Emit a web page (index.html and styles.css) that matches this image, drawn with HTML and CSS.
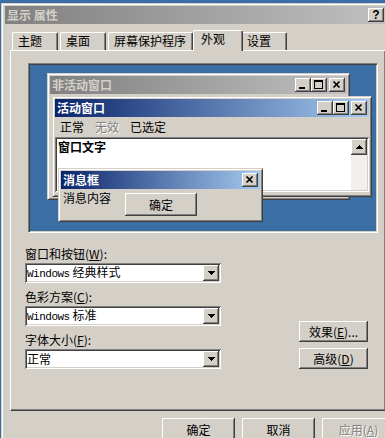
FILE: index.html
```html
<!DOCTYPE html>
<html lang="zh-CN">
    <head>
        <meta charset="UTF-8" />
        <title>显示 属性</title>
        <link rel="stylesheet" href="styles.css">
    </head>
    <body>
        <div class="dialog">
            <div class="caption inactive">
                <span class="caption-text">显示 属性</span>
                <span class="cap-btn help">?</span>
            </div>
            <div class="tabs">
                <div class="tab">主题</div>
                <div class="tab">桌面</div>
                <div class="tab">屏幕保护程序</div>
                <div class="tab selected">外观</div>
                <div class="tab">设置</div>
            </div>
            <div class="panel">
                <div class="preview">
                    <div class="win win-inactive">
                        <div class="caption inactive">
                            <span class="caption-text">非活动窗口</span>
                            <span class="cap-btn first"><svg width="16" height="14"><rect x="4" y="9" width="6" height="2"/></svg></span>
                            <span class="cap-btn"><svg width="16" height="14"><path fill-rule="evenodd" d="M3 2h9v9H3z M4 4h7v6H4z"/></svg></span>
                            <span class="cap-btn close"><svg width="16" height="14"><path d="M4.5 3.5L10.5 9.5M10.5 3.5L4.5 9.5" stroke="#000" stroke-width="1.7"/></svg></span>
                        </div>
                    </div>
                    <div class="win win-active">
                        <div class="caption active">
                            <span class="caption-text">活动窗口</span>
                            <span class="cap-btn first"><svg width="16" height="14"><rect x="4" y="9" width="6" height="2"/></svg></span>
                            <span class="cap-btn"><svg width="16" height="14"><path fill-rule="evenodd" d="M3 2h9v9H3z M4 4h7v6H4z"/></svg></span>
                            <span class="cap-btn close"><svg width="16" height="14"><path d="M4.5 3.5L10.5 9.5M10.5 3.5L4.5 9.5" stroke="#000" stroke-width="1.7"/></svg></span>
                        </div>
                        <div class="menubar">
                            <span class="menu-item">正常</span>
                            <span class="menu-item disabled">无效</span>
                            <span class="menu-item">已选定</span>
                        </div>
                        <div class="textarea">
                            <span class="window-text">窗口文字</span>
                            <div class="scrollbar">
                                <span class="scroll-btn"><svg width="7" height="4"><path d="M3 0h1v1H3z M2 1h3v1H2z M1 2h5v1H1z M0 3h7v1H0z"/></svg></span>
                            </div>
                        </div>
                    </div>
                    <div class="win msgbox">
                        <div class="caption active">
                            <span class="caption-text">消息框</span>
                            <span class="cap-btn first close"><svg width="16" height="14"><path d="M4.5 3.5L10.5 9.5M10.5 3.5L4.5 9.5" stroke="#000" stroke-width="1.7"/></svg></span>
                        </div>
                        <div class="msg-body">
                            <span class="msg-text">消息内容</span>
                            <span class="btn msg-ok">确定</span>
                        </div>
                    </div>
                </div>
                <div class="settings">
                    <div class="fields">
                        <div class="field">
                            <div class="label">窗口和按钮(<u>W</u>):</div>
                            <div class="combo">
                                <span class="combo-text"><span class="latin">Windows</span> 经典样式</span>
                                <span class="drop"><svg width="7" height="4"><path d="M0 0h7v1H0z M1 1h5v1H1z M2 2h3v1H2z M3 3h1v1H3z"/></svg></span>
                            </div>
                        </div>
                        <div class="field">
                            <div class="label">色彩方案(<u>C</u>):</div>
                            <div class="combo">
                                <span class="combo-text"><span class="latin">Windows</span> 标准</span>
                                <span class="drop"><svg width="7" height="4"><path d="M0 0h7v1H0z M1 1h5v1H1z M2 2h3v1H2z M3 3h1v1H3z"/></svg></span>
                            </div>
                        </div>
                        <div class="field">
                            <div class="label">字体大小(<u>F</u>):</div>
                            <div class="combo">
                                <span class="combo-text">正常</span>
                                <span class="drop"><svg width="7" height="4"><path d="M0 0h7v1H0z M1 1h5v1H1z M2 2h3v1H2z M3 3h1v1H3z"/></svg></span>
                            </div>
                        </div>
                    </div>
                    <div class="side-buttons">
                        <span class="btn side">效果(<u>E</u>)...</span>
                        <span class="btn side">高级(<u>D</u>)</span>
                    </div>
                </div>
            </div>
            <div class="footer">
                <span class="btn footer-btn">确定</span>
                <span class="btn footer-btn">取消</span>
                <span class="btn footer-btn disabled">应用(<u>A</u>)</span>
            </div>
        </div>
    </body>
</html>
```

FILE: styles.css
```css
* {
    box-sizing: border-box;
}
body {
    margin: 0;
    height: 438px;
    overflow: hidden;
    background: #3a6ea5;
    font-family: "Noto Sans CJK SC", sans-serif;
    font-size: 12px;
    line-height: 16px;
    color: #000;
}
.dialog {
    margin: 3px 0 0 1px;
    width: 389px;
    height: 435px;
    overflow: hidden;
    padding: 2px 3px 0;
    background: #d4d0c8;
    border: 1px solid;
    border-bottom: 0;
    border-color: #d4d0c8 #404040 #404040 #d4d0c8;
    box-shadow: inset 1px 1px #fff, inset -1px 0 #808080;
}
.caption {
    display: flex;
    align-items: center;
    height: 18px;
    padding: 0 2px;
}
.caption.inactive {
    background: linear-gradient(to right, #808080, #c0c0c0);
    color: #d4d0c8;
}
.caption.active {
    background: linear-gradient(to right, #0a246a, #a6caf0);
    color: #fff;
}
.caption-text {
    font-weight: bold;
    white-space: nowrap;
}
.cap-btn {
    display: flex;
    width: 16px;
    height: 14px;
    background: #d4d0c8;
    box-shadow: inset -1px -1px #404040, inset 1px 1px #fff, inset -2px -2px #808080;
}
.cap-btn.first,
.cap-btn.help {
    margin-left: auto;
}
.cap-btn.close {
    margin-left: 2px;
}
.cap-btn.first.close {
    margin-left: auto;
}
.help {
    justify-content: center;
    font-family: "Liberation Sans", sans-serif;
    font-weight: bold;
    font-size: 12px;
    line-height: 14px;
    color: #000;
}
.tabs {
    display: flex;
    align-items: flex-end;
    height: 20px;
    margin-top: 6px;
    padding-left: 7px;
}
.tab {
    min-width: 46px;
    height: 18px;
    margin-right: 2px;
    padding: 0 6px 0 5px;
    line-height: 16px;
    background: #d4d0c8;
    border-top: 1px solid #fff;
    border-left: 1px solid #fff;
    border-right: 1px solid #404040;
    border-radius: 2px 2px 0 0;
    box-shadow: inset -1px 0 #808080;
    white-space: nowrap;
}
.tab.selected {
    position: relative;
    z-index: 1;
    height: 21px;
    margin: 0 0 -1px -2px;
    min-width: 50px;
    padding: 0 8px 0 7px;
}
.tab.selected + .tab {
    margin-left: -2px;
}
.panel {
    height: 361px;
    margin-left: 5px;
    width: 376px;
    padding: 12px 0 0 14px;
    border: 1px solid;
    border-color: #fff #404040 #404040 #fff;
    box-shadow: inset -1px -1px #808080;
}
.preview {
    position: relative;
    width: 350px;
    height: 170px;
    margin-left: 3px;
    background: #3a6ea5;
    border: 1px solid;
    border-color: #808080 #fff #fff #808080;
    box-shadow: inset 1px 1px #404040, inset -1px -1px #d4d0c8;
}
.win {
    position: absolute;
    padding: 2px;
    background: #d4d0c8;
    border: 1px solid;
    border-color: #d4d0c8 #404040 #404040 #d4d0c8;
    box-shadow: inset 1px 1px #fff, inset -1px -1px #808080;
}
.win-inactive {
    left: 18px;
    top: 9px;
    width: 303px;
    height: 127px;
}
.win-active {
    left: 23px;
    top: 32px;
    width: 320px;
    height: 101px;
}
.msgbox {
    left: 29px;
    top: 104px;
    width: 205px;
    height: 54px;
}
.menubar {
    display: flex;
    height: 19px;
    line-height: 19px;
}
.menu-item {
    padding: 0 6px 0 5px;
}
.menu-item.disabled {
    color: #808080;
    text-shadow: 1px 1px #fff;
}
.textarea {
    display: flex;
    height: 55px;
    margin-top: 1px;
    padding: 2px;
    background: #fff;
    box-shadow: inset 1px 1px #808080, inset -1px -1px #fff, inset 2px 2px #404040, inset -2px -2px #d4d0c8;
}
.window-text {
    padding-left: 1px;
    font-weight: bold;
    line-height: 15px;
}
.scrollbar {
    margin-left: auto;
    width: 16px;
    background: #f1f0ec;
}
.scroll-btn,
.drop {
    display: flex;
    align-items: center;
    justify-content: center;
    width: 16px;
    height: 16px;
    background: #d4d0c8;
    box-shadow: inset -1px -1px #404040, inset 1px 1px #fff, inset -2px -2px #808080;
}
.msg-body {
    display: flex;
    align-items: flex-start;
    padding-left: 2px;
}
.msg-text {
    margin-top: 1px;
    line-height: 15px;
}
.btn {
    display: flex;
    align-items: center;
    justify-content: center;
    background: #d4d0c8;
    box-shadow: inset -1px -1px #404040, inset 1px 1px #fff, inset -2px -2px #808080;
    white-space: nowrap;
}
.msg-ok {
    width: 72px;
    height: 23px;
    margin: 4px 0 0 14px;
}
.settings {
    display: flex;
    margin-top: 13px;
}
.fields {
    display: flex;
    flex-direction: column;
    gap: 6px;
    width: 196px;
}
.label {
    height: 16px;
    line-height: 16px;
}
.combo {
    display: flex;
    align-items: center;
    height: 20px;
    margin-top: 1px;
    padding: 0 2px;
    background: #fff;
    box-shadow: inset 1px 1px #808080, inset -1px -1px #fff, inset 2px 2px #404040, inset -2px -2px #d4d0c8;
}
.combo-text {
    line-height: 16px;
    white-space: pre;
}
.latin {
    font-family: "Liberation Mono", monospace;
    font-size: 11px;
    letter-spacing: -0.5px;
}
.drop {
    margin-left: auto;
}
.side-buttons {
    display: flex;
    flex-direction: column;
    justify-content: flex-end;
    gap: 6px;
    margin-left: 78px;
}
.btn.side {
    width: 69px;
    height: 21px;
}
.footer {
    display: flex;
    gap: 7px;
    margin-top: 7px;
    padding-left: 157px;
}
.footer-btn {
    flex: 0 0 73px;
    height: 23px;
}
.btn.disabled {
    color: #808080;
    text-shadow: 1px 1px #fff;
}
```
